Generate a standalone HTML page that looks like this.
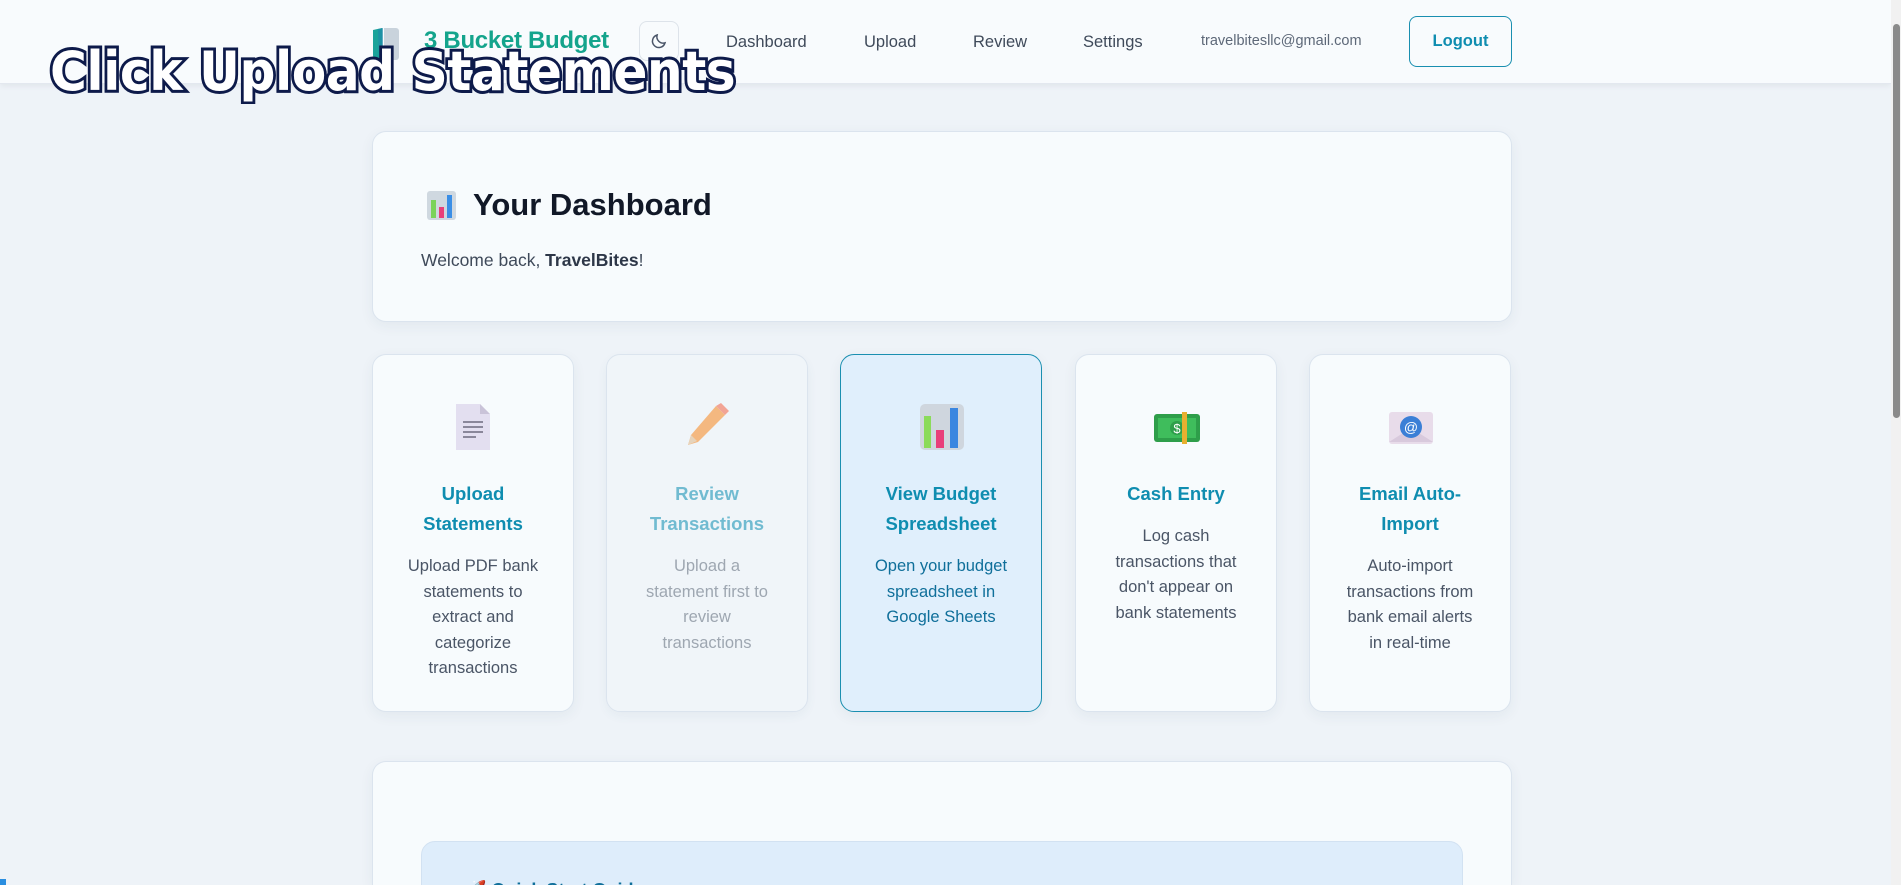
<!DOCTYPE html>
<html style="width:1901px;height:885px;overflow:hidden"><head><meta charset="utf-8"><style>
*{box-sizing:border-box;margin:0;padding:0}
body{width:1901px;height:885px;overflow:hidden;background:#eef3f8;font-family:"Liberation Sans",sans-serif;position:relative}
.hdr{position:absolute;left:0;top:0;width:1891px;height:84px;background:#f8fbfd;box-shadow:0 2px 6px rgba(0,0,0,.06);border-bottom:1px solid #e3e8ef}
.abs{position:absolute}
.nav{position:absolute;top:33px;font-size:16.5px;color:#3f4a5a}
.card{position:absolute;background:#f7fbfd;border:1px solid #dbe4ee;border-radius:14px;box-shadow:0 4px 14px rgba(30,60,90,.06)}
.tile{top:354px;width:202px;height:358px;text-align:center}
.tile .ic{position:absolute;left:77px;top:47px}
.tile h3{position:absolute;left:0;width:100%;font-size:18.5px;line-height:30px;color:#0f8db0;font-weight:bold}
.tile p{position:absolute;left:30px;right:30px;font-size:16.5px;line-height:25.5px;color:#4a5566}
</style></head><body>
<div class="hdr">
  <svg class="abs" style="left:371px;top:26px" width="30" height="36" viewBox="0 0 30 36"><path d="M2 4l9-2v32l-7-2a3 3 0 0 1-2-3z" fill="#1aa39a"/><path d="M13 2h12a3 3 0 0 1 3 3v26a3 3 0 0 1-3 3H13z" fill="#c9d3dc"/><path d="M7 3l5-1v32l-4-1z" fill="#1f8aa8" opacity=".7"/></svg>
  <div class="abs" style="left:424px;top:27px;font-size:24px;font-weight:bold;color:#14a48c;letter-spacing:-.3px">3 Bucket Budget</div>
  <div class="abs" style="left:639px;top:21px;width:40px;height:40px;border:1px solid #dde3ea;border-radius:8px;background:#f8fbfd"></div>
  <svg class="abs" style="left:650px;top:32px" width="18" height="18" viewBox="0 0 24 24"><path d="M20 14.5A8.5 8.5 0 0 1 9.5 4a8.5 8.5 0 1 0 10.5 10.5z" fill="none" stroke="#4a5568" stroke-width="2"/></svg>
  <div class="nav" style="left:726px">Dashboard</div>
  <div class="nav" style="left:864px">Upload</div>
  <div class="nav" style="left:973px">Review</div>
  <div class="nav" style="left:1083px">Settings</div>
  <div class="nav" style="left:1201px;top:33px;font-size:14.5px;color:#5d6878">travelbitesllc@gmail.com</div>
  <div class="abs" style="left:1409px;top:16px;width:103px;height:51px;border:1.5px solid #1a8fb0;border-radius:8px;color:#0f8db0;font-size:16.5px;font-weight:bold;text-align:center;line-height:49px">Logout</div>
</div>
<div class="abs" style="left:50px;top:40px;font-size:54px;font-weight:bold;color:#fff;-webkit-text-stroke:6px #0d1a4a;paint-order:stroke fill;letter-spacing:-.5px;font-family:'DejaVu Sans','Liberation Sans',sans-serif;transform:scaleX(.93);transform-origin:left;white-space:nowrap">Click Upload Statements</div>

<div class="card" style="left:372px;top:131px;width:1140px;height:191px">
  <svg class="abs" style="left:53px;top:58px" width="31" height="31" viewBox="0 0 31 31"><rect x="1" y="1" width="29" height="29" rx="3" fill="#cfd8e0"/><rect x="5" y="10" width="5" height="18" fill="#7bd35a"/><rect x="13" y="17" width="5" height="11" fill="#e8407a"/><rect x="21" y="5" width="5" height="23" fill="#3a8ee6"/></svg>
  <div class="abs" style="left:100px;top:55px;font-size:31px;font-weight:bold;color:#111827">Your Dashboard</div>
  <div class="abs" style="left:48px;top:118px;font-size:17.5px;color:#3f4a5a">Welcome back, <b style="color:#2d3748">TravelBites</b>!</div>
</div>

<div class="card tile" style="left:372px">
  <svg class="ic" width="46" height="50" viewBox="0 0 46 50"><path d="M6 2h24l10 10v36H6z" fill="#e3dff0"/><path d="M30 2v10h10z" fill="#c9c3d8"/><g stroke="#8a879a" stroke-width="2"><line x1="13" y1="20" x2="33" y2="20"/><line x1="13" y1="25" x2="33" y2="25"/><line x1="13" y1="30" x2="33" y2="30"/><line x1="13" y1="35" x2="26" y2="35"/></g></svg>
  <h3 style="top:124px">Upload<br>Statements</h3>
  <p style="top:199px">Upload PDF bank statements to extract and categorize transactions</p>
</div>
<div class="card tile" style="left:606px;background:#f1f6fa;opacity:.95">
  <svg class="ic" width="46" height="50" viewBox="0 0 46 50"><path d="M32 4l9 9-27 27-10 3 3-10z" fill="#f5b57a"/><path d="M32 4l5-3 8 8-4 4z" fill="#f3a090"/><path d="M7 33l6 6-9 4z" fill="#e6d2b8"/></svg>
  <h3 style="top:124px;color:#6bb9cf">Review<br>Transactions</h3>
  <p style="top:199px;color:#9aa3ae">Upload a statement first to review transactions</p>
</div>
<div class="card tile" style="left:840px;background:#e0effc;border-color:#1a8fb0">
  <svg class="ic" width="48" height="50" viewBox="0 0 48 50"><rect x="2" y="2" width="44" height="46" rx="5" fill="#cfd6de"/><rect x="6" y="14" width="7" height="32" fill="#8bdb5a"/><rect x="18" y="28" width="8" height="18" fill="#e83e7a"/><rect x="32" y="6" width="8" height="40" fill="#3a86e0"/></svg>
  <h3 style="top:124px">View Budget<br>Spreadsheet</h3>
  <p style="top:199px;color:#0f6f9a">Open your budget spreadsheet in Google Sheets</p>
</div>
<div class="card tile" style="left:1075px">
  <svg class="ic" width="48" height="50" viewBox="0 0 48 50"><rect x="1" y="12" width="46" height="28" rx="3" fill="#2e9e4a"/><rect x="5" y="16" width="38" height="20" fill="#3fbd5c"/><circle cx="24" cy="26" r="7" fill="#2e9e4a"/><text x="24" y="31" font-size="13" text-anchor="middle" fill="#fff" font-family="Liberation Sans">$</text><rect x="29" y="10" width="5" height="32" fill="#e8b030"/></svg>
  <h3 style="top:124px">Cash Entry</h3>
  <p style="top:169px">Log cash transactions that don't appear on bank statements</p>
</div>
<div class="card tile" style="left:1309px">
  <svg class="ic" width="48" height="50" viewBox="0 0 48 50"><rect x="2" y="10" width="44" height="32" rx="3" fill="#e8dcea"/><path d="M2 40l22-14 22 14z" fill="#d8c9dc"/><circle cx="24" cy="25" r="11" fill="#3b7fd6"/><text x="24" y="30" font-size="14" text-anchor="middle" fill="#fff" font-family="Liberation Sans">@</text></svg>
  <h3 style="top:124px">Email Auto-<br>Import</h3>
  <p style="top:199px">Auto-import transactions from bank email alerts in real-time</p>
</div>

<div class="card" style="left:372px;top:761px;width:1140px;height:124px;border-bottom:none;border-radius:14px 14px 0 0;overflow:hidden">
  <div class="abs" style="left:48px;top:79px;width:1042px;height:60px;background:#deedfb;border:1px solid #d2e2f2;border-radius:14px 14px 0 0;overflow:hidden">
    <div class="abs" style="left:42px;top:38px;font-size:18px;font-weight:bold;color:#0f6f9a;white-space:nowrap">🚀 Quick Start Guide</div>
  </div>
</div>
<div class="abs" style="left:1891px;top:0;width:10px;height:885px;background:#f1f1f1"></div>
<div class="abs" style="left:1893px;top:24px;width:7px;height:394px;background:#8a8a8a;border-radius:4px"></div>
<div class="abs" style="left:0;top:879px;width:6px;height:6px;background:#2a8ee0"></div>
</body></html>
